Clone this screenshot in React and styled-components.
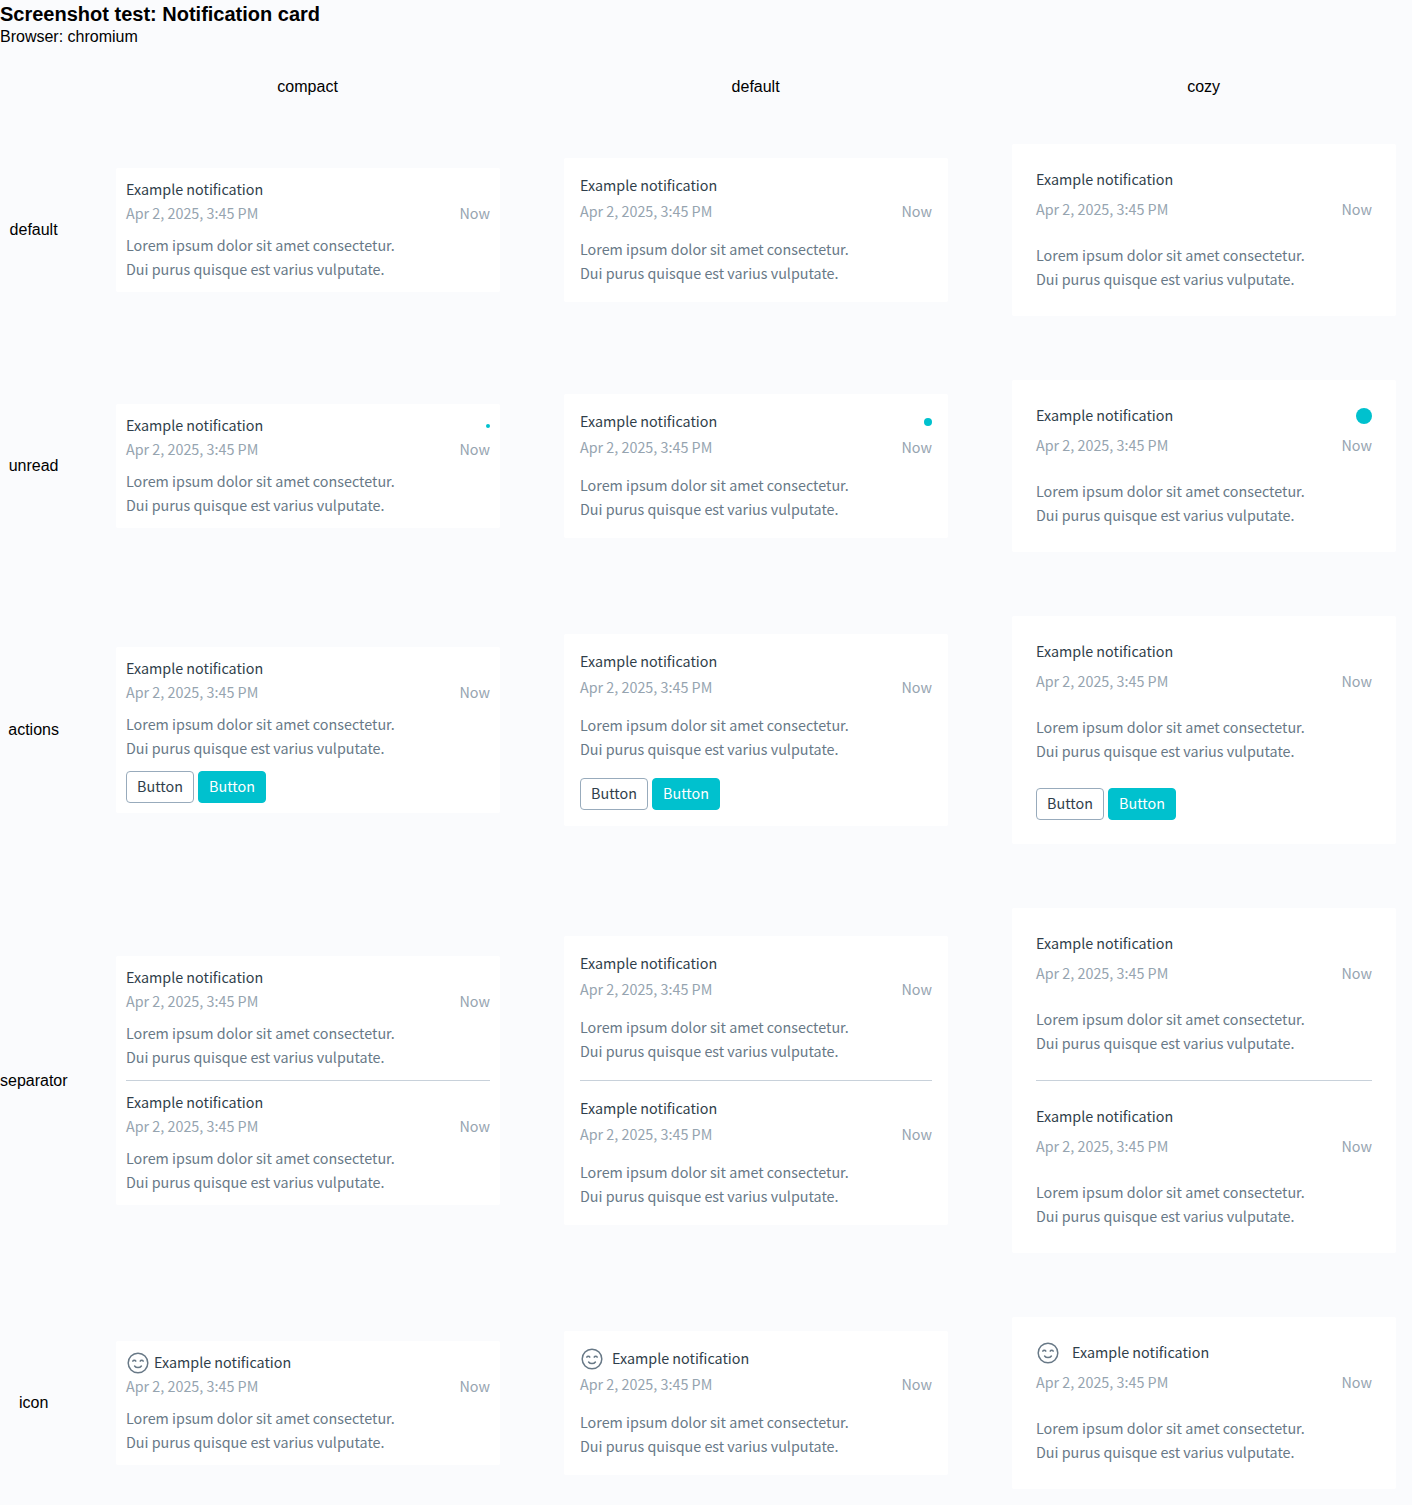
import React from "react";
import styled, { createGlobalStyle } from "styled-components";

const GlobalStyle = createGlobalStyle`
  body {
    margin: 0;
    background: #fafbfd;
    color: #000;
    font: 16px/18px "Liberation Sans", Arial, sans-serif;
  }
`;

const densities = {
  compact: { pad: 10, titleGap: 0, bodyGap: 8, dot: 4, iconGap: 4 },
  default: { pad: 16, titleGap: 2, bodyGap: 14, dot: 8, iconGap: 8 },
  cozy: { pad: 24, titleGap: 6, bodyGap: 22, dot: 16, iconGap: 12 },
};

const Page = styled.main`
  width: 1412px;
`;

const Heading = styled.h1`
  margin: 0;
  font-size: 20px;
  line-height: 28px;
  font-weight: 700;
`;

const Browser = styled.p`
  margin: 0 0 32px;
`;

const Matrix = styled.div`
  display: grid;
  grid-template-columns: 68px repeat(3, 416px);
  gap: 32px;
  align-items: center;
`;

const Label = styled.div`
  padding-right: 0.8px;
  text-align: center;
  white-space: nowrap;
`;

const Cell = styled.div`
  padding: 16px;
`;

const Panel = styled.section`
  background: #fff;
  border-radius: 2px;
  font-family: "Noto Sans CJK SC", "Noto Sans", sans-serif;
  font-size: 14.33px;
  line-height: 24px;
`;

const Card = styled.article`
  padding: ${(p) => p.$d.pad}px;
`;

const TitleRow = styled.header`
  display: flex;
  align-items: center;
  height: 24px;
  gap: ${(p) => p.$d.iconGap}px;
`;

const Title = styled.span`
  flex: 1;
  margin-top: -2px;
  color: #2f3e4a;
`;

const Dot = styled.span`
  width: ${(p) => p.$d.dot}px;
  height: ${(p) => p.$d.dot}px;
  border-radius: 50%;
  background: #00c1ce;
`;

const Meta = styled.div`
  display: flex;
  justify-content: space-between;
  height: 24px;
  margin-top: ${(p) => p.$d.titleGap - 1}px;
  color: #96a4b0;
`;

const Body = styled.div`
  height: 49px;
  margin-top: ${(p) => p.$d.bodyGap}px;
  color: #687987;
`;

const Actions = styled.div`
  display: flex;
  gap: 4px;
  margin-top: ${(p) => p.$d.pad}px;
`;

const Button = styled.button`
  box-sizing: border-box;
  width: 68px;
  height: 32px;
  padding: 0 0 2px;
  border: 1px solid ${(p) => (p.$primary ? "#00c1ce" : "#98abbc")};
  border-radius: 4px;
  background: ${(p) => (p.$primary ? "#00c1ce" : "#fff")};
  color: ${(p) => (p.$primary ? "#fff" : "#2f3e4a")};
  font: inherit;
`;

const Separator = styled.hr`
  height: 1px;
  margin: 0 ${(p) => p.$d.pad}px;
  border: 0;
  background: #c8d1da;
`;

const Icon = styled.svg`
  flex: none;
  width: 24px;
  height: 24px;
  fill: none;
  stroke: #687987;
  stroke-width: 1.5;
  stroke-linecap: round;
  stroke-linejoin: round;
`;

const Smile = () => (
  <Icon viewBox="0 0 24 24" aria-hidden="true">
    <circle cx="12" cy="12" r="9.8" />
    <path d="M6.8 10.2c.6-1.2 2.4-1.2 3 0M14.2 10.2c.6-1.2 2.4-1.2 3 0M8.6 15c1.5 2.1 5.3 2.1 6.8 0" />
  </Icon>
);

function Notification({ d, unread, actions, icon }) {
  return (
    <Card $d={d}>
      <TitleRow $d={d}>
        {icon && <Smile />}
        <Title>Example notification</Title>
        {unread && <Dot $d={d} />}
      </TitleRow>
      <Meta $d={d}>
        <span>Apr 2, 2025, 3:45 PM</span>
        <span>Now</span>
      </Meta>
      <Body $d={d}>
        Lorem ipsum dolor sit amet consectetur.
        <br />
        Dui purus quisque est varius vulputate.
      </Body>
      {actions && (
        <Actions $d={d}>
          <Button>Button</Button>
          <Button $primary>Button</Button>
        </Actions>
      )}
    </Card>
  );
}

const variants = ["default", "unread", "actions", "separator", "icon"];

export default function App() {
  return (
    <Page>
      <GlobalStyle />
      <Heading>Screenshot test: Notification card</Heading>
      <Browser>Browser: chromium</Browser>
      <Matrix>
        <span />
        {Object.keys(densities).map((name) => (
          <Label key={name}>{name}</Label>
        ))}
        {variants.map((variant) => (
          <React.Fragment key={variant}>
            <Label>{variant}</Label>
            {Object.entries(densities).map(([name, d]) => (
              <Cell key={name}>
                <Panel>
                  <Notification
                    d={d}
                    unread={variant === "unread"}
                    actions={variant === "actions"}
                    icon={variant === "icon"}
                  />
                  {variant === "separator" && (
                    <>
                      <Separator $d={d} />
                      <Notification d={d} />
                    </>
                  )}
                </Panel>
              </Cell>
            ))}
          </React.Fragment>
        ))}
      </Matrix>
    </Page>
  );
}
